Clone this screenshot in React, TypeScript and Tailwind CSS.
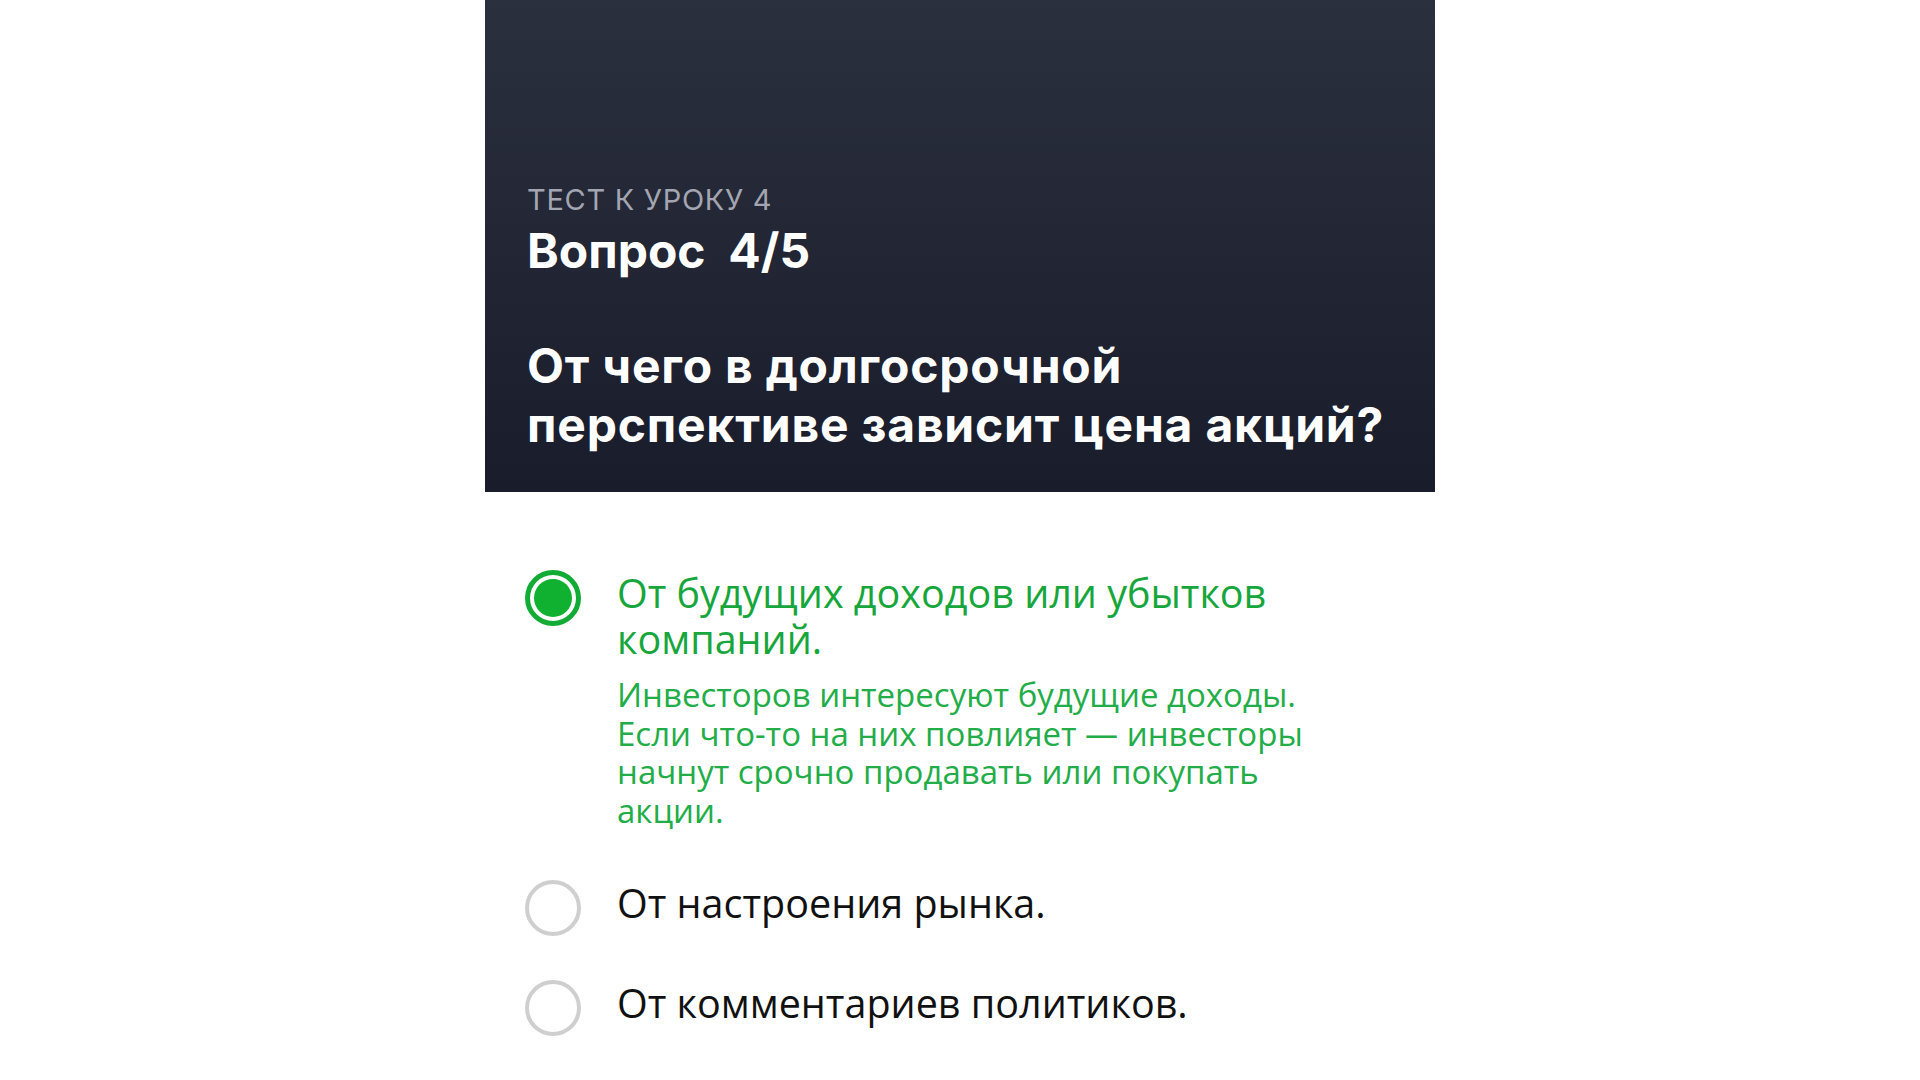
import React from "react";

type Option = { text: string; note?: string; picked?: boolean };

const options: Option[] = [
  {
    text: "От будущих доходов или убытков компаний.",
    note: "Инвесторов интересуют будущие доходы. Если что-то на них повлияет — инвесторы начнут срочно продавать или покупать акции.",
    picked: true,
  },
  { text: "От настроения рынка." },
  { text: "От комментариев политиков." },
];

function Radio({ on }: { on?: boolean }) {
  if (on) {
    return (
      <div className="w-[56px] h-[56px] shrink-0 rounded-full border-[5px] border-[#12ab35] p-[4px]">
        <div className="w-full h-full rounded-full bg-[#10b130]" />
      </div>
    );
  }
  return <div className="w-[56px] h-[56px] shrink-0 rounded-full border-[4px] border-[#cfcfcf]" />;
}

export default function App() {
  return (
    <div className="min-h-screen bg-white flex justify-center">
      <div className="w-[950px] flex flex-col">
        <header className="h-[492px] flex flex-col justify-end px-[42px] pb-[38px] bg-gradient-to-b from-[#2b303f] to-[#191c2b] font-['Inter',sans-serif]">
          <div className="text-[29px] leading-[36px] text-[#a3a6b1] tracking-[0.7px]">ТЕСТ К УРОКУ 4</div>
          <div className="mt-[5px] text-[48px] leading-[56px] font-bold text-white">Вопрос&nbsp; 4/5</div>
          <h1 className="mt-[57px] text-[48px] leading-[59px] font-bold text-white tracking-[0.8px]">
            От чего в долгосрочной
            <br />
            перспективе зависит цена акций?
          </h1>
        </header>

        <div className="pl-[40px] pt-[78px] flex flex-col gap-[44px] font-['Open_Sans',sans-serif]">
          {options.map((o) => (
            <div key={o.text} className="flex items-start gap-[36px]">
              <Radio on={o.picked} />
              <div className="w-[700px]">
                <div className={`text-[39.5px] leading-[46px] ${o.picked ? "text-[#16a63b]" : "text-[#111111]"}`}>
                  {o.text}
                </div>
                {o.note && (
                  <div className="mt-[14px] pb-[6px] text-[33px] leading-[38.5px] text-[#22ad48]">{o.note}</div>
                )}
              </div>
            </div>
          ))}
        </div>
      </div>
    </div>
  );
}
